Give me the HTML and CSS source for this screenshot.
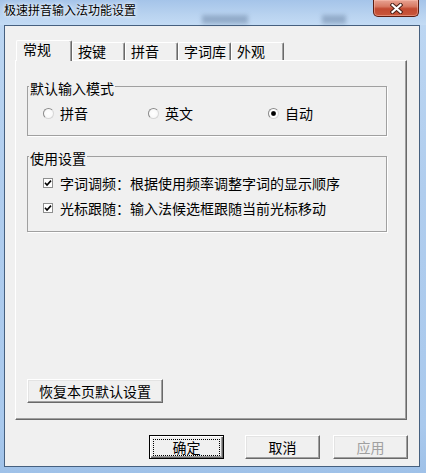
FILE: index.html
```html
<!DOCTYPE html>
<html lang="zh-CN">
<head>
<meta charset="utf-8">
<title>极速拼音输入法功能设置</title>
<link rel="stylesheet" href="styles.css">
</head>
<body>
<div class="window">
  <div class="titlebar">
    <span class="title">极速拼音输入法功能设置</span>
    <div class="close">
      <svg width="13" height="11" viewBox="0 0 13 11">
        <path d="M2.5 2 L10.5 9 M10.5 2 L2.5 9" stroke="#4a2018" stroke-width="4.2" stroke-linecap="square"/>
        <path d="M2.5 2 L10.5 9 M10.5 2 L2.5 9" stroke="#ffffff" stroke-width="2.2" stroke-linecap="square"/>
      </svg>
    </div>
  </div>
  <div class="client">
    <div class="tabs">
      <div class="tab active">常规</div>
      <div class="tab">按键</div>
      <div class="tab">拼音</div>
      <div class="tab">字词库</div>
      <div class="tab">外观</div>
    </div>
    <div class="panel">
      <fieldset class="group">
        <legend>默认输入模式</legend>
        <div class="radios">
          <label class="opt"><span class="radio"></span>拼音</label>
          <label class="opt"><span class="radio"></span>英文</label>
          <label class="opt"><span class="radio on"></span>自动</label>
        </div>
      </fieldset>
      <fieldset class="group group2">
        <legend>使用设置</legend>
        <div class="checks">
          <label class="opt opt-check"><span class="check"><svg width="8" height="8" viewBox="0 0 8 8"><path d="M1 3.8 L3 6 L7 1.6" fill="none" stroke="#000" stroke-width="1.6"/></svg></span>字词调频：根据使用频率调整字词的显示顺序</label>
          <label class="opt opt-check"><span class="check"><svg width="8" height="8" viewBox="0 0 8 8"><path d="M1 3.8 L3 6 L7 1.6" fill="none" stroke="#000" stroke-width="1.6"/></svg></span>光标跟随：输入法候选框跟随当前光标移动</label>
        </div>
      </fieldset>
      <button class="btn restore">恢复本页默认设置</button>
    </div>
    <div class="actions">
      <button class="btn default">确定</button>
      <button class="btn cancel">取消</button>
      <button class="btn apply" disabled>应用</button>
    </div>
  </div>
</div>
</body>
</html>
```
FILE: styles.css
```css
* { box-sizing: border-box; }

body {
  margin: 0;
  font-family: "Noto Sans CJK SC", "Noto Sans", sans-serif;
  font-size: 14px;
  color: #000;
}

.window {
  width: 426px;
  height: 473px;
  display: flex;
  flex-direction: column;
  overflow: hidden;
  background: linear-gradient(180deg, #a7c6ea 0%, #bcd6f2 5%, #b0cdee 40%, #a9c9ed 90%, #9fc1e8 100%);
}

.titlebar {
  height: 25px;
  display: flex;
  align-items: flex-start;
  position: relative;
  background: linear-gradient(180deg, #a5c4e9 0%, #b9d3f0 60%, #c3dbf4 100%);
}

.titlebar::before,
.titlebar::after {
  content: "";
  position: absolute;
  top: 15px;
  height: 9px;
  background: rgba(70, 95, 130, 0.35);
  filter: blur(2px);
}
.titlebar::before { left: 202px; width: 46px; }
.titlebar::after { left: 322px; width: 24px; }

.title {
  font-size: 12px;
  line-height: 14px;
  padding: 3px 0 0 4px;
  text-shadow: 0 0 6px #fff, 0 0 3px rgba(255, 255, 255, 0.9);
  position: relative;
  z-index: 1;
}

.close {
  margin-left: auto;
  margin-right: 7px;
  width: 46px;
  height: 17px;
  border: 1px solid #5c1d12;
  border-top: 0;
  border-radius: 0 0 5px 5px;
  background: linear-gradient(180deg, #e8a393 0%, #d87a64 40%, #c24a31 55%, #c9573c 100%);
  box-shadow: inset 0 0 0 1px rgba(255, 200, 185, 0.45);
  display: flex;
  align-items: center;
  justify-content: center;
  position: relative;
  z-index: 1;
}

.client {
  flex: 1;
  margin: 0 6px 6px 4px;
  border: 1px solid #46607f;
  background: #f0f0f0;
  display: flex;
  flex-direction: column;
  padding: 14px 0 0 10px;
}

.tabs {
  display: flex;
  align-items: flex-end;
  height: 20px;
  padding-left: 1px;
  position: relative;
  z-index: 1;
}

.tab {
  width: 53px;
  height: 18px;
  border-top: 1px solid #fff;
  border-left: 1px solid #fff;
  border-right: 1px solid #696969;
  border-radius: 2px 2px 0 0;
  box-shadow: inset -1px 0 #a0a0a0;
  background: #f0f0f0;
  padding-left: 5px;
  line-height: 16px;
  white-space: nowrap;
}

.tab.active {
  width: 56px;
  height: 21px;
  margin-bottom: -1px;
  padding-left: 6px;
}

.panel {
  width: 392px;
  height: 360px;
  border-top: 1px solid #fff;
  border-left: 1px solid #fff;
  border-right: 1px solid #696969;
  border-bottom: 1px solid #696969;
  box-shadow: inset -1px -1px #a0a0a0;
  display: flex;
  flex-direction: column;
  align-items: flex-start;
  padding: 17px 0 16px 11px;
}

.group {
  margin: 0;
  padding: 0;
  width: 360px;
  border: 1px solid #a0a0a0;
  box-shadow: 1px 1px 0 #fff;
  min-inline-size: 0;
}

.group2 { margin-top: 12px; }

.group legend {
  margin-left: 1px;
  padding: 3px 1px 0;
  line-height: 14px;
}

.radios {
  display: grid;
  grid-template-columns: 105px 120px auto;
  padding: 10px 0 14px 15px;
  line-height: 16px;
}

.checks {
  display: flex;
  flex-direction: column;
  gap: 9px;
  padding: 10px 0 15px 15px;
  line-height: 16px;
}

.opt {
  display: flex;
  align-items: center;
  gap: 6px;
  white-space: nowrap;
}

.opt-check { gap: 7px; }

.radio {
  width: 11px;
  height: 11px;
  border-radius: 50%;
  border: 1px solid;
  border-color: #8a8a8a #d6d6d6 #d6d6d6 #8a8a8a;
  background: radial-gradient(circle, #ffffff 0, #f6f6f6 100%);
}

.radio.on {
  background: radial-gradient(circle, #000 0, #000 1.8px, #777 2.4px, #fff 3px, #f6f6f6 100%);
}

.check {
  width: 10px;
  height: 10px;
  border: 1px solid #8e8f8f;
  background: #fff;
  display: flex;
  align-items: center;
  justify-content: center;
}

.btn {
  font-family: inherit;
  font-size: 14px;
  color: #000;
  height: 24px;
  padding: 0;
  margin: 0;
  background: #f0f0f0;
  border: 1px solid;
  border-color: #fff #696969 #696969 #fff;
  box-shadow: inset -1px -1px #a0a0a0, inset 1px 1px #e3e3e3;
  display: flex;
  align-items: center;
  justify-content: center;
  line-height: 16px;
  position: relative;
}

.restore {
  margin-top: auto;
  width: 136px;
}

.actions {
  display: flex;
  justify-content: flex-end;
  margin-top: 15px;
  padding-right: 11px;
}

.actions .btn { width: 75px; }
.actions .cancel { margin-left: 21px; }
.actions .apply { margin-left: 13px; }

.default {
  border: 1px solid #000;
  box-shadow: inset 1px 1px #fff, inset -1px -1px #696969, inset -2px -2px #a0a0a0;
}

.default::after {
  content: "";
  position: absolute;
  inset: 3px 3px 2px 3px;
  border: 1px dotted #000;
}

.apply:disabled { color: #a0a0a0; }
```
